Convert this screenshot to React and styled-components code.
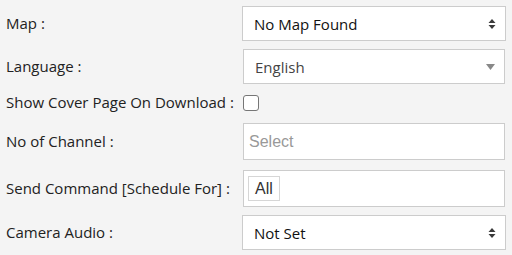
import React from "react";
import styled, { createGlobalStyle } from "styled-components";

const GlobalStyle = createGlobalStyle`
  html, body {
    margin: 0;
    padding: 0;
    background: #f4f4f4;
  }
  body {
    font-family: "Open Sans", "Liberation Sans", sans-serif;
    color: #222;
  }
`;

const rows = [
  { label: "Map :", kind: "select", value: "No Map Found" },
  { label: "Language :", kind: "dropdown", value: "English" },
  { label: "Show Cover Page On Download :", kind: "checkbox" },
  { label: "No of Channel :", kind: "placeholder", value: "Select" },
  { label: "Send Command [Schedule For] :", kind: "tags", value: "All" },
  { label: "Camera Audio :", kind: "select", value: "Not Set" },
];

// space under each row, by kind
const gapAfter = { select: 8, dropdown: 8, checkbox: 9, placeholder: 10, tags: 8 };

const Spinner = () => (
  <svg width="8" height="12" viewBox="0 0 8 12">
    <path d="M4 1 L7.5 5 L0.5 5 Z" fill="#3a3a3a" />
    <path d="M4 11 L7.5 7 L0.5 7 Z" fill="#3a3a3a" />
  </svg>
);

const Caret = () => (
  <svg width="9" height="6" viewBox="0 0 9 6">
    <path d="M0 0 L9 0 L4.5 6 Z" fill="#888" />
  </svg>
);

const App = () => {
  return (
    <>
      <GlobalStyle />
      <Form>
        {rows.map((r) => (
          <Row key={r.label} $gap={gapAfter[r.kind]}>
            <Label>{r.label}</Label>
            {r.kind === "select" && (
              <Box $inset={0}>
                <Value>{r.value}</Value>
                <Spinner />
              </Box>
            )}
            {r.kind === "dropdown" && (
              <Box $inset={1}>
                <Value $muted>{r.value}</Value>
                <Caret />
              </Box>
            )}
            {r.kind === "checkbox" && <Check />}
            {r.kind === "placeholder" && (
              <Box $inset={1} $tall>
                <Placeholder>{r.value}</Placeholder>
              </Box>
            )}
            {r.kind === "tags" && (
              <Box $inset={1} $tall $tight>
                <Tag>{r.value}</Tag>
              </Box>
            )}
          </Row>
        ))}
      </Form>
    </>
  );
};

export default App;

const Form = styled.div`
  width: 512px;
  height: 255px;
  padding: 6px 6px 0 6px;
  box-sizing: border-box;
  display: flex;
  flex-direction: column;
`;

const Row = styled.div`
  display: grid;
  grid-template-columns: 236px 1fr;
  align-items: center;
  margin-bottom: ${(p) => p.$gap}px;
`;

const Label = styled.div`
  font-size: 15px;
  line-height: 20px;
  margin-bottom: 2px;
  color: #222;
  white-space: nowrap;
`;

const Box = styled.div`
  box-sizing: border-box;
  height: ${(p) => (p.$tall ? "37px" : "35px")};
  margin: 0 ${(p) => p.$inset}px;
  background: #fff;
  border: 1px solid #cccccc;
  display: flex;
  align-items: center;
  justify-content: space-between;
  padding: ${(p) => (p.$tight ? "0 4px" : "0 9px 0 11px")};
`;

const Value = styled.span`
  font-size: 15px;
  color: ${(p) => (p.$muted ? "#444" : "#111")};
`;

const Placeholder = styled.span`
  font-family: "Liberation Sans", Arial, sans-serif;
  font-size: 16px;
  color: #999;
  margin-left: -6px;
`;

const Tag = styled.span`
  font-family: "Liberation Sans", Arial, sans-serif;
  font-size: 16px;
  color: #333;
  border: 1px solid #d6d6d6;
  height: 25px;
  box-sizing: border-box;
  padding: 0 6px;
  display: flex;
  align-items: center;
`;

const Check = styled.span`
  width: 16px;
  height: 16px;
  box-sizing: border-box;
  margin-left: 1px;
  border: 1.5px solid #767676;
  border-radius: 3px;
  background: #fff;
`;
